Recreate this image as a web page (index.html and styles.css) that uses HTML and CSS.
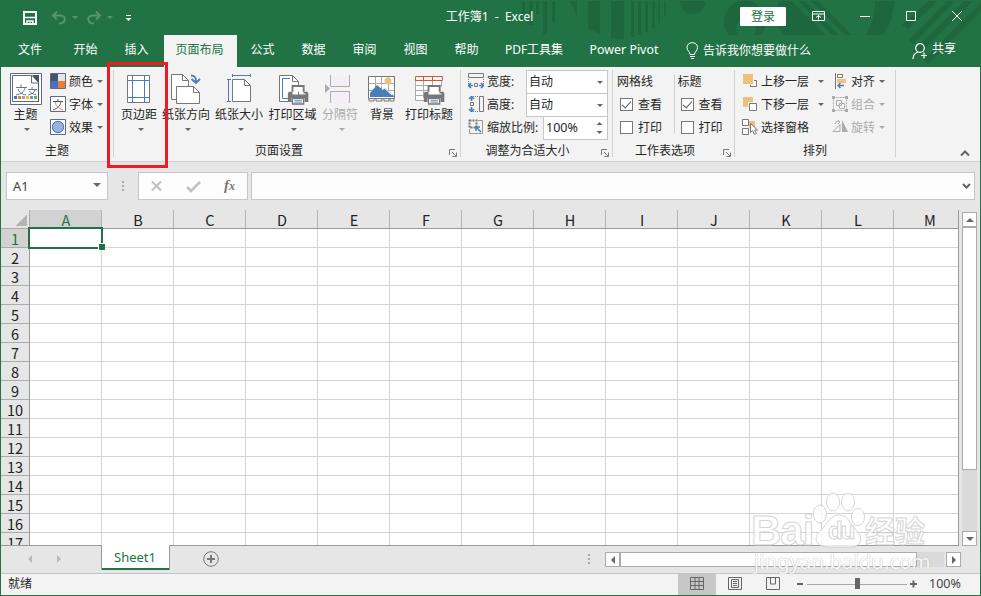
FILE: index.html
```html
<!DOCTYPE html>
<html lang="zh-CN">
<head>
<meta charset="utf-8">
<title>工作簿1 - Excel</title>
<link rel="stylesheet" href="styles.css">
</head>
<body>
<svg class="defs" width="0" height="0">
  <defs>
    <g id="printer">
      <path d="M7 7V1h12v6" fill="#fff" stroke="#777" stroke-width="2"/>
      <path d="M3 7h4v3h12V7h4l1 2v9h-4v-4H6v4H2V9z" fill="#777"/>
      <path d="M19 9h2v1h-2z" fill="#fff"/>
      <path d="M7 14h12v6H7z" fill="#fff" stroke="#777" stroke-width="1.4"/>
      <path d="M9 16h8M9 18h8" stroke="#4a7ebb"/>
    </g>
    <g id="launch"><path d="M.5 6V.5H6M3 3l4 4M7.500 3.500v4h-4" fill="none" stroke="#777"/></g>
  </defs>
</svg>
<div class="window">
  <header class="top">
    <svg class="pattern" width="461" height="67" viewBox="520 0 461 67" fill="#1e663e">
      <path d="M522 1h3v13h-3zM529 1h4v24h-4zM536 1h3v14h-3zM543 1h4v33h-4zM552 1h3v21h-3zM570 1h7v15zM588 1h12v33l-12-6zM611 1h13v38l-13-1zM631 1h3v36h-3zM638 1h3v34h-3zM645 1h3v31h-3zM652 1h3v27h-3zM658 1h2v22h-2zM664 1h2v15h-2zM680 1h26a13 13 0 0 1-26 0z"/>
      <path d="M729 35a21 21 0 1 1 32 0h-7a10 10 0 1 0-16 0z"/>
      <path d="M779 1h13l34 34h-42l-11-15zM798 1h7l34 34h-7zM811 1h7l34 34h-7zM875 1h19c0 14-5 26-11 34h-17c6-10 9-22 9-34z"/>
      <path d="M928 1h10l-30 28-6-4zM947 1h8l-42 43-4-4zM964 1h9l-55 54-5-4zM981 3v8l-53 53-5-4z"/>
    </svg>
    <div class="titlebar">
      <svg width="140" height="35" viewBox="0 0 140 35" fill="none" stroke="#fff">
        <path d="M24 12h12v12H24z" stroke-width="2"/><path d="M25 17.500h10M27 24v-3h6v3" stroke-width="1.500"/><path d="M30 21v3"/>
        <g stroke="#559474" stroke-width="2"><path d="M53 15.500h7c7 0 6 8-1 8M57 11.500l-4 4 4 4M100 15.500h-7c-7 0-6 8 1 8M96 11.500l4 4-4 4"/></g>
        <path d="M72 16h6l-3 3zM107 16h6l-3 3z" fill="#559474" stroke="none"/>
        <path d="M126 15.500h5"/><path d="M125.500 18h6l-3 3z" fill="#fff" stroke="none"/>
      </svg>
      <div class="doc">工作簿1&nbsp; -&nbsp; Excel</div>
      <button class="login">登录</button>
      <svg width="171" height="35" viewBox="810 0 171 35" fill="none" stroke="#fff"><path d="M812.500 11.500h12v9h-12zM812 14h13M818.500 19.500v-4M816 17.500l2.500-2 2.500 2M860 16.500h10M906.500 11.500h9v9h-9zM952 11l10 10M962 11l-10 10"/></svg>
    </div>
    <nav class="tabs">
      <span class="tab file">文件</span><span class="tab">开始</span><span class="tab">插入</span><span class="tab active">页面布局</span><span class="tab">公式</span><span class="tab">数据</span><span class="tab">审阅</span><span class="tab">视图</span><span class="tab">帮助</span><span class="tab pdf">PDF工具集</span><span class="tab pivot">Power Pivot</span>
      <svg class="bulb" width="13" height="18" viewBox="0 0 13 18" fill="none" stroke="#fff"><path d="M4 12.500c0-3-3-3.500-3-7 0-6.500 10.500-6.500 10.500 0 0 3.500-3 4-3 7zM4 14.500h5M5 16.500h3"/></svg>
      <span class="tell">告诉我你想要做什么</span>
      <svg class="person" width="17" height="17" viewBox="0 0 17 17" fill="none" stroke="#fff" stroke-width="1.200"><circle cx="8" cy="5" r="4.300"/><path d="M1 16c0-4 2-6 5-7M9 12.500h6M12 9.500v6"/></svg>
      <span class="share">共享</span>
    </nav>
  </header>

  <section class="ribbon">
    <div class="group theme">
      <div class="body">
        <div class="big"><svg width="32" height="32" viewBox="0 0 32 32"><path d="M.5.5h31v31H.5z" fill="#fff" stroke="#5b6b85"/><path d="M2.500 2.500h19l7 7v19h-26z" fill="#fff" stroke="#5b6b85"/><path d="M22 2h7v27h-1V10z" fill="#44546a"/><path d="M21.500 2.500v7.500h7" fill="#fff" stroke="#5b6b85"/><path d="M6 14.500h11M11 11.500v3M8 16c1 3 3 5 8 6M15 15c-1 4-4 6-9 7M18 16.500h9M22 14v2M19.500 18c1 2 3 3 7 4M25 17c-1 3-3 4-7 5" fill="none" stroke="#68758a"/><path d="M4 23h3v3H4z" fill="#4472c4"/><path d="M8 23h3v3H8z" fill="#ed7d31"/><path d="M12 23h3v3h-3z" fill="#a5a5a5"/><path d="M16 23h3v3h-3z" fill="#ffc000"/><path d="M20 23h3v3h-3z" fill="#5b9bd5"/><path d="M24 23h3v3h-3z" fill="#70ad47"/></svg><span>主题</span><i class="arrow"></i></div>
        <div class="stack">
          <div class="item"><svg width="16" height="16"><path d="M.5.5h15v15H.5z" fill="#fff" stroke="#5b6b85"/><path d="M1 1h7v7H1z" fill="#44546a"/><path d="M8 1h7v7H8z" fill="#e7e6e6"/><path d="M1 8h7v7H1z" fill="#4472c4"/><path d="M8 8h7v7H8z" fill="#ed7d31"/></svg><span>颜色</span><i class="arrow"></i></div>
          <div class="item"><svg width="16" height="16" fill="none"><path d="M.5.5h15v15H.5z" fill="#fff" stroke="#5b6b85"/><path d="M3 5.500h10M8 3v2" stroke="#44546a"/><path d="M5 6c1 4 3 6 8 8" stroke="#ed7d31"/><path d="M11 6c-1 4-3 6-8 8" stroke="#44546a"/></svg><span>字体</span><i class="arrow"></i></div>
          <div class="item"><svg width="16" height="16"><path d="M.5.5h15v15H.5z" fill="#fff" stroke="#5b6b85"/><circle cx="8" cy="8" r="5.700" fill="#9db0dc" stroke="#4472c4"/></svg><span>效果</span><i class="arrow"></i></div>
        </div>
      </div>
      <div class="caption">主题</div>
    </div>

    <div class="group page">
      <div class="body">
        <div class="big w42"><svg width="32" height="32" fill="none"><path d="M4.500 2.500h22v27h-22z" fill="#fff" stroke="#777"/><path d="M9.500 3v26M21.500 3v26M5 7.500h21M5 24.500h21" stroke="#4a7ebb"/></svg><span>页边距</span><i class="arrow"></i></div>
        <div class="big w52"><svg width="32" height="32" fill="none" stroke="#777"><path d="M1.500 1.500h11l6 6v19h-17z" fill="#fff"/><path d="M12.500 1.500v6h6"/><path d="M6.500 13.500h17l6 6v11h-23z" fill="#fff"/><path d="M23.500 13.500v6h6"/><path d="M21 2.500c4 0 5 2 5 6M21.500 6l4.500 4 4-4" stroke="#4a7ebb" stroke-width="2"/></svg><span>纸张方向</span><i class="arrow"></i></div>
        <div class="big w54"><svg width="32" height="32" fill="none" stroke="#777"><path d="M9.500 6.500h12l6 6v16h-18z" fill="#fff"/><path d="M21.500 6.500v6h6"/><path d="M9.500 1v3M27.500 1v3M9 2.500h18M4 6.500h4M4 28.500h4M5.500 7v22" stroke="#4a7ebb"/></svg><span>纸张大小</span><i class="arrow"></i></div>
        <div class="big w53"><svg width="32" height="32" fill="none"><path d="M2.500 2.500h13l6 6v20h-19z" fill="#fff" stroke="#777"/><path d="M15.500 2.500v6h6" stroke="#777"/><path d="M13 5.500H5.500v20H12" stroke="#4a7ebb"/><use href="#printer" transform="translate(9 12) scale(.93 .95)"/></svg><span>打印区域</span><i class="arrow"></i></div>
        <div class="big w42 off"><svg width="32" height="32" fill="#f4eff6" stroke="#ababab"><path d="M6.500 2v11.500h19V2M6.500 30V18.500h19V30"/><path d="M1 11l5 4.500-5 4.500z" fill="#ababab" stroke="none"/></svg><span>分隔符</span><i class="arrow"></i></div>
        <div class="big w42"><svg width="32" height="32" fill="none"><path d="M2.500 3.500h26v22h-26z" fill="#fff" stroke="#777"/><path d="M9.500 4v20M15.500 4v20M22.500 4v20M3 10.500h25M3 17.500h25" stroke="#aaa"/><circle cx="22" cy="8" r="3.500" fill="#ebc17c"/><path d="M4 24v-4l7-8 6 5 2-2 9 8v1z" fill="#4a7ebb"/><path d="M15 12l11 10" stroke="#fff"/><path d="M3 25.500h5v2.500H3zM10 25.500h6v2.500h-6zM18 25.500h5v2.500h-5zM24 25.500h4v2.500h-4z" stroke="#777"/></svg><span>背景</span></div>
        <div class="big w52"><svg width="32" height="32" fill="none"><path d="M2.500 7v21h23V7z" fill="#fff"/><path d="M2.500 7v20.500H14M10.500 7v18M19.500 7v7M28.500 7v7M3 12.500h25M3 17.500h12M3 22.500h12" stroke="#aaa"/><path d="M2.500 3.500h27v4h-27zM10.500 3v5M19.500 3v5" stroke="#d0593c"/><use href="#printer" transform="translate(9 12) scale(.93 .95)"/></svg><span>打印标题</span></div>
      </div>
      <div class="caption">页面设置</div><svg class="launcher" width="8" height="8"><use href="#launch"/></svg>
    </div>

    <div class="group scale">
      <div class="body rows">
        <div class="item"><svg width="16" height="16" fill="none"><path d="M.5.500h15v4H.5z" stroke="#777"/><path d="M.5 6v5M15.500 6v5" stroke="#777" stroke-dasharray="1 1"/><path d="M6.500 10.500h3v3h-3z" stroke="#777"/><path d="M0 12.500h5M11 12.500h5M3 10l-2.500 2.500L3 15M13 10l2.500 2.500L13 15" stroke="#4a7ebb" stroke-width="1.600"/></svg><span>宽度:</span><div class="field">自动<i class="arrow"></i></div></div>
        <div class="item"><svg width="16" height="16" fill="none"><path d="M11.500.5h4v15h-4z" stroke="#777"/><path d="M5 .5h5M5 15.500h5" stroke="#777" stroke-dasharray="1 1"/><path d="M2.500 6.500h3v3h-3z" stroke="#777"/><path d="M3.500 0v5M3.500 11v5M1 3L3.500.500 6 3M1 13l2.500 2.500L6 13" stroke="#4a7ebb" stroke-width="1.600"/></svg><span>高度:</span><div class="field">自动<i class="arrow"></i></div></div>
        <div class="item"><svg width="16" height="16" fill="none"><path d="M1.500 1.500h7v7h-7z" stroke="#777" stroke-width="2" stroke-dasharray="2 1"/><path d="M10 1.500h4.500v13h-13V10" stroke="#999"/><path d="M13 13L8 8M8 12V8h4" stroke="#4a7ebb" stroke-width="1.500"/></svg><span>缩放比例:</span><div class="field zoomval">100%<svg width="7" height="14" fill="#666"><path d="M.5 4l3-3 3 3zM.5 10l3 3 3-3z"/></svg></div></div>
      </div>
      <div class="caption">调整为合适大小</div><svg class="launcher" width="8" height="8"><use href="#launch"/></svg>
    </div>

    <div class="group options">
      <div class="body">
        <div class="checks"><div>网格线</div><div><b class="box on"></b>查看</div><div><b class="box"></b>打印</div></div>
        <div class="checks second"><div>标题</div><div><b class="box on"></b>查看</div><div><b class="box"></b>打印</div></div>
      </div>
      <div class="caption">工作表选项</div><svg class="launcher" width="8" height="8"><use href="#launch"/></svg>
    </div>

    <div class="group arrange">
      <div class="body">
        <div class="stack left">
          <div class="item"><svg width="16" height="16"><path d="M8.500 7.500h6v6h-6z" fill="#fff" stroke="#777"/><path d="M.5.5h11v11H.5z" fill="#ebc17c" stroke="#f3f3f3"/></svg><span>上移一层</span><i class="arrow"></i></div>
          <div class="item"><svg width="16" height="16"><path d="M1 1h10v10H1z" fill="#ebc17c"/><path d="M6 6h10v10H6z" fill="#f3f3f3"/><path d="M7.500 7.500h7v7h-7z" fill="#fff" stroke="#777"/></svg><span>下移一层</span><i class="arrow"></i></div>
          <div class="item"><svg width="16" height="16" fill="#fff" stroke="#777"><path d="M.5.5h6v6h-6zM.5 9.500h6v6h-6z"/><path d="M7 2h6v7H7z" fill="#ebc17c" stroke="none"/><path d="M8.500 4.500v9l2-2 2 4 2-1-2-3.500h3z"/></svg><span>选择窗格</span></div>
        </div>
        <div class="stack right">
          <div class="item"><svg width="16" height="16" fill="none"><path d="M3.500 0v16" stroke="#777"/><path d="M5.500 1.500h5v3h-5z" fill="#fff" stroke="#777"/><path d="M5 6h9v4H5z" fill="#ebc17c"/><path d="M12 12.500H6M8.500 10L6 12.500 8.500 15" stroke="#4a7ebb" stroke-width="1.500"/></svg><span>对齐</span><i class="arrow"></i></div>
          <div class="item off"><svg width="16" height="16" fill="none" stroke="#ababab"><path d="M1.500 1.500h13v13h-13z" stroke-dasharray="2 1"/><path d="M4.500 4.500h5v5h-5zM7.500 7.500h5v5h-5z"/><path d="M0 0h3v3H0zM13 0h3v3h-3zM0 13h3v3H0zM13 13h3v3h-3z" fill="#ababab" stroke="none"/></svg><span>组合</span><i class="arrow"></i></div>
          <div class="item off"><svg width="16" height="16" fill="none" stroke="#ababab"><path d="M1 12.500h7v-7z"/><path d="M10 1v12h6z" fill="#ababab" stroke="none"/><path d="M3 5c1-3 3-3 5-2M6 1l2 2-2 2"/></svg><span>旋转</span><i class="arrow"></i></div>
        </div>
      </div>
      <div class="caption">排列</div>
    </div>
    <svg class="collapse" width="10" height="7" fill="none" stroke="#666" stroke-width="2"><path d="M1 5.500l4-4 4 4"/></svg>
  </section>

  <section class="formula">
    <div class="namebox">A1<i class="arrow"></i></div>
    <span class="dots"></span>
    <div class="fx"><svg width="108" height="26" fill="none" stroke="#c0c0c0" stroke-width="2"><path d="M13 8.500l9 9M22 8.500l-9 9"/><path d="M48 14l4 4 9-9" stroke-width="2.500"/></svg><em>f<small>x</small></em></div>
    <div class="input"><svg width="9" height="7" fill="none" stroke="#666" stroke-width="2"><path d="M1 1l3.500 3.500L8 1"/></svg></div>
  </section>

  <main class="work">
    <div class="sheet">
      <div class="corner"></div>
      <div class="cols"><span class="sel">A</span><span>B</span><span>C</span><span>D</span><span>E</span><span>F</span><span>G</span><span>H</span><span>I</span><span>J</span><span>K</span><span>L</span><span>M</span></div>
      <div class="nums"><span class="sel">1</span><span>2</span><span>3</span><span>4</span><span>5</span><span>6</span><span>7</span><span>8</span><span>9</span><span>10</span><span>11</span><span>12</span><span>13</span><span>14</span><span>15</span><span>16</span><span>17</span></div>
      <div class="cells"><div class="cursor"></div></div>
    </div>
    <div class="vscroll"><b class="btn"><i class="up"></i></b><b class="thumb"></b><b class="btn end"><i class="down"></i></b></div>
  </main>

  <section class="sheetbar">
    <i class="prev"></i><i class="next"></i>
    <div class="sheettab">Sheet1</div>
    <svg class="add" width="16" height="16" fill="none" stroke="#777"><circle cx="8" cy="8" r="7.300"/><path d="M4 8h8M8 4v8" stroke-width="2"/></svg>
    <span class="dots"></span>
    <div class="hscroll"><b class="btn"><i class="lt"></i></b><b class="thumb"></b><b class="btn end"><i class="rt"></i></b></div>
  </section>

  <footer class="status">
    <span class="ready">就绪</span>
    <span class="view on"><svg width="14" height="14" fill="none" stroke="#666"><path d="M.5.500h13v12H.5zM5 0v13M9 0v13M0 4.500h14M0 8.500h14"/></svg></span>
    <span class="view"><svg width="14" height="14" fill="none" stroke="#666"><path d="M.5.500h13v12H.5zM3.500 2.500h7v8h-7zM5 4.500h4M5 6.500h4M5 8.500h4"/></svg></span>
    <span class="view"><svg width="14" height="14" fill="none" stroke="#666"><path d="M.5.500h13v12H.5zM4.500 1v6h5V1"/></svg></span>
    <svg width="130" height="21" viewBox="792 574 130 21" fill="none" stroke="#666"><path d="M797 584h6M910 584h7M913.500 580.500v7" stroke-width="2"/><path d="M807 584.500h100" stroke="#aaa"/><path d="M855 578h5v11h-5z" fill="#666" stroke="none"/></svg>
    <span class="pct">100%</span>
  </footer>
</div>
<div class="highlight"></div>
<div class="mark">
  <div class="brand"><span class="bai">Bai</span><span class="paw"><svg width="54" height="58" fill="#fff" stroke="#ccc"><ellipse cx="7" cy="23" rx="6.500" ry="9"/><ellipse cx="20" cy="11" rx="6.500" ry="9"/><ellipse cx="35" cy="11" rx="6.500" ry="9"/><ellipse cx="45" cy="26" rx="6.500" ry="8.500"/><path d="M26 24c9 0 11 9 17 15 9 9 4 17-5 17H15C3 56-1 47 8 39c7-7 9-15 18-15z"/></svg><b>du</b></span><span class="cn">经验</span></div>
  <div class="url">jingyan.baidu.com</div>
</div>
</body>
</html>
```
FILE: styles.css
```css
* { box-sizing: border-box; }
body { margin: 0; width: 981px; height: 596px; overflow: hidden; position: relative; font: 12px/16px "Noto Sans", "Noto Sans CJK SC", sans-serif; color: #262626; }
.defs { position: absolute; }
svg { display: block; flex: none; }
.window { width: 981px; height: 596px; border: solid #217346; border-width: 0 1px 1px; display: flex; flex-direction: column; background: #e6e6e6; }
.top { height: 67px; margin: 0 -1px; background: #217346; color: #fff; position: relative; flex: none; }
.pattern { position: absolute; right: 0; top: 0; }
.titlebar { height: 35px; display: flex; position: relative; }
.doc { width: 600px; text-align: center; line-height: 33px; padding-left: 99px; white-space: pre; }
.login { width: 46px; height: 19px; margin: 7px 24px 0 0; padding: 0; border: 0; border-radius: 1px; background: #fff; color: #217346; font: inherit; line-height: 19px; }
.tabs { height: 32px; display: flex; align-items: center; position: relative; line-height: 30px; white-space: nowrap; }
.tab { width: 51px; height: 32px; text-align: center; flex: none; }
.tab.file { width: 60px; }
.tab.active { width: 73px; margin: 0 0 0 2px; padding-right: 2px; background: #f3f3f3; color: #217346; }
.tab.pdf { width: 84px; }
.tab.pivot { width: 96px; font-size: 12.400px; }
.tab.active + .tab { width: 51px; }
.bulb { margin-left: 14px; }
.tell { margin-left: 4px; flex: 1; }
.person { margin-right: 3px; }
.share { width: 49px; line-height: 26px; height: 30px; }

.ribbon { height: 95px; background: #f3f3f3; border-bottom: 1px solid #d0d0d0; display: flex; flex: none; padding-top: 3px; white-space: nowrap; }
.group { position: relative; height: 87px; border-right: 1px solid #d0d0d0; display: flex; flex-direction: column; flex: none; }
.theme { width: 113px; } .page { width: 347px; } .scale { width: 152px; } .options { width: 122px; } .arrange { width: 161px; }
.body { height: 69px; display: flex; flex: none; }
.caption { text-align: center; line-height: 23px; flex: none; }
.page .caption { padding-right: 16px; } .scale .caption { padding-right: 18px; } .options .caption { padding-right: 17px; }
.launcher { position: absolute; right: 3px; bottom: 0; }
.arrow { width: 0; height: 0; border: 3px solid transparent; border-top-color: #666; border-bottom: 0; flex: none; }
.big { display: flex; flex-direction: column; align-items: center; width: 52px; padding-top: 3px; flex: none; }
.big span { margin: 1px -4px 0; line-height: 18px; }
.big .arrow { margin: 4px 0 0 3px; }
.w42 { width: 42px; } .w52 { width: 52px; } .w53 { width: 53px; } .w54 { width: 54px; }
.off { color: #ababab; } .off .arrow { border-top-color: #ababab; }
.page .body { padding-left: 4px; }
.theme .big { width: 49px; }
.item { display: flex; align-items: center; height: 23px; }
.item > svg { margin-bottom: 1px; }
.stack .item span { margin-left: 3px; }
.stack .arrow { margin-left: 4px; }
.left { padding-left: 7px; width: 97px; }
.left .arrow { margin-left: 9px; }
.rows { flex-direction: column; padding-left: 7px; }
.rows .item > span { margin-left: 3px; flex: 1; }
.field { width: 82px; height: 24px; margin: 0 4px -1px 0; background: #fff; border: 1px solid #c6c6c6; display: flex; align-items: center; justify-content: space-between; padding: 0 4px 0 2px; }
.zoomval { width: 65px; font-size: 12.500px; }
.checks { width: 61px; padding-left: 4px; }
.checks div { display: flex; align-items: center; height: 23px; }
.second { border-left: 1px solid #d0d0d0; height: 58px; margin-top: 5px; padding-left: 3px; }
.second div:first-child { height: 18px; padding-bottom: 5px; }
.box { width: 13px; height: 13px; margin: 0 5px 0 3px; border: 1px solid #777; background: #fff; display: flex; justify-content: center; }
.on.box::after { content: ""; width: 4px; height: 8px; border: solid #555; border-width: 0 1.500px 1.500px 0; transform: rotate(42deg); }
.collapse { margin: 80px 0 0 64px; }

.formula { height: 48px; display: flex; padding: 10px 0 0 5px; flex: none; }
.namebox, .fx, .input { height: 28px; background: #fdfdfd; border: 1px solid #c6c6c6; }
.namebox { width: 102px; display: flex; align-items: center; justify-content: space-between; padding: 0 6px; color: #444; font-size: 12.800px; }
.namebox .arrow { border-width: 4px 4px 0; margin-top: -3px; }
.dots { width: 2px; height: 10px; background: repeating-linear-gradient(#aaa 0 2px, transparent 2px 4px); margin: 9px 14px 0; }
.fx { width: 110px; position: relative; }
.fx em { position: absolute; left: 85px; top: 2px; font: italic bold 15px/20px "Liberation Serif", serif; color: #777; }
.fx small { font-size: 12px; }
.input { width: 724px; margin-left: 3px; display: flex; justify-content: flex-end; align-items: center; padding-right: 3px; }

.work { height: 336px; display: flex; flex: none; }
.sheet { width: 958px; display: grid; grid-template: 19px 316px / 29px 928px; border: solid #999; border-width: 0 1px 1px 0; font: 14.500px/18px "Noto Sans CJK SC", sans-serif; color: #222; }
.corner { border: solid #ababab; border-width: 0 1px 1px 0; background: linear-gradient(135deg, transparent 50%, #b4b4b4 50%) 14px 4px / 12px 12px no-repeat; }
.cols { display: flex; overflow: hidden; border-bottom: 1px solid #999; }
.cols span { width: 72px; flex: none; border-right: 1px solid #b4b4b4; text-align: center; line-height: 19px; height: 18px; padding-left: 1px; }
.cols span:last-child { border: 0; width: 71px; }
.cols .sel, .nums .sel { background: #d2d2d2; color: #217346; }
.nums { border-right: 1px solid #999; overflow: hidden; }
.nums span { display: block; height: 19px; border-bottom: 1px solid #ababab; text-align: center; line-height: 20px; }
.cells { background: repeating-linear-gradient(90deg, transparent 0 71px, #d4d4d4 71px 72px), repeating-linear-gradient(#fff 0 18px, #d4d4d4 18px 19px); position: relative; }
.cursor { position: absolute; left: -2px; top: -2px; width: 75px; height: 22px; border: 2px solid #217346; }
.cursor::after { content: ""; position: absolute; right: -4px; bottom: -3px; width: 6px; height: 6px; background: #217346; border: solid #fff; border-width: 1px 0 0 1px; }
.vscroll { width: 15px; height: 334px; margin: 2px 0 0 3px; background: #dadada; display: flex; flex-direction: column; }
.btn { width: 15px; height: 15px; border: 1px solid #ababab; background: #fdfdfd; display: flex; align-items: center; justify-content: center; flex: none; }
.thumb { display: block; height: 243px; border: 1px solid #ababab; background: #fff; }
.vscroll .end { margin-top: auto; }
.up, .down, .lt, .rt, .prev, .next { width: 0; height: 0; border: 4px solid transparent; }
.up { border-top: 0; border-bottom-color: #666; } .down { border-bottom: 0; border-top-color: #666; }
.lt, .prev { border-left: 0; border-right-color: #666; } .rt, .next { border-right: 0; border-left-color: #666; }

.sheetbar { height: 27px; display: flex; flex: none; }
.prev { margin: 9px 0 0 27px; border-right-color: #b8b8b8; } .next { margin: 9px 0 0 25px; border-left-color: #b8b8b8; }
.sheettab { width: 69px; height: 25px; margin: -1px 0 0 40px; background: #fff; border: solid #999; border-width: 0 1px; box-shadow: inset 0 -2px #217346; color: #217346; font-size: 13px; line-height: 25px; text-align: center; position: relative; padding-right: 1px; }
.add { margin: 5px 0 0 33px; }
.sheetbar .dots { margin: 8px 15px 0 369px; }
.hscroll { width: 356px; height: 15px; margin-top: 6px; background: #dadada; display: flex; }
.hscroll .thumb { width: 297px; height: 15px; }
.hscroll .end { margin-left: auto; box-shadow: -2px 0 #e6e6e6; }
.status { flex: 1; display: flex; align-items: center; background: #f3f3f3; border-top: 1px solid #c6c6c6; color: #444; }
.ready { width: 677px; padding: 0 0 1px 7px; color: #262626; }
.view { width: 38px; height: 21px; display: flex; align-items: center; justify-content: center; flex: none; }
.view.on { background: #c6c6c6; }
.view svg { margin-bottom: 1px; }
.pct { margin-left: 7px; font-size: 12.500px; padding-bottom: 1px; }

.highlight { position: absolute; left: 107px; top: 62px; width: 61px; height: 106px; border: 3px solid #ed1c24; }
.mark { position: absolute; left: 751px; top: 489px; opacity: .8; color: #fff; white-space: nowrap; }
.brand { display: flex; height: 60px; align-items: flex-end; font-weight: bold; -webkit-text-stroke: 1px #ccc; }
.bai { font: bold 42px/44px "Liberation Sans", sans-serif; width: 62px; letter-spacing: -1px; height: 40px; }
.paw { position: relative; width: 52px; }
.paw b { position: absolute; left: 15px; bottom: 5px; font: bold 24px/26px "Liberation Sans", sans-serif; letter-spacing: -2px; }
.cn { font: bold 30px/40px "Noto Sans CJK SC", sans-serif; height: 40px; }
.url { font: 20.400px/24px "Noto Sans", sans-serif; text-shadow: 0 0 1px #aaa, 0 0 1px #aaa; padding-left: 3px; }
```
